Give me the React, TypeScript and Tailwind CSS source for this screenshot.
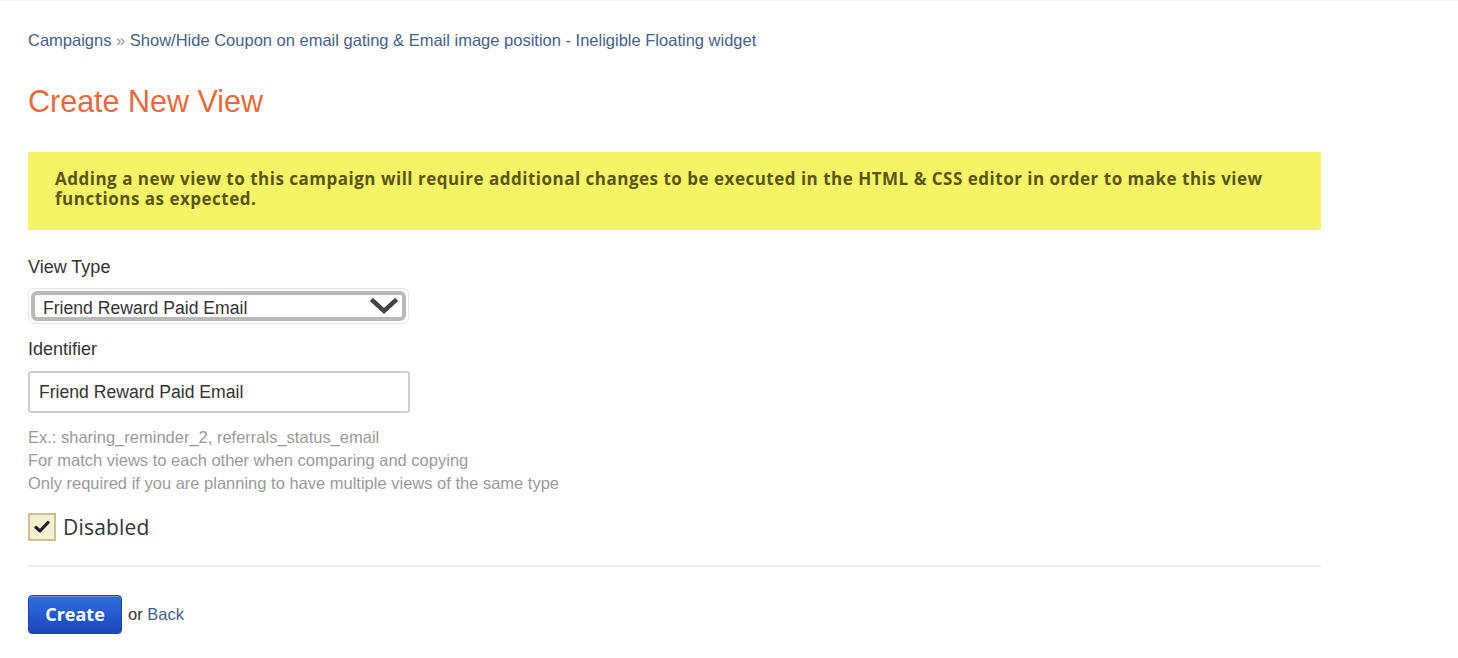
export default function App() {
  return (
    <div className="min-h-[658px] bg-white border-t border-[#f4f4f4] font-['Liberation_Sans',Arial,sans-serif]">
      <div className="w-[1293px] ml-[28px] pt-[29px]">
        {/* breadcrumb */}
        <div className="text-[16.5px] leading-[20px] text-[#44618a]">
          <a className="cursor-pointer">Campaigns</a>
          <span className="text-[#8a9ab0]"> » </span>
          <a className="cursor-pointer">Show/Hide Coupon on email gating &amp; Email image position - Ineligible Floating widget</a>
        </div>

        <h1 className="mt-[35px] text-[30.5px] leading-[32px] text-[#e8693a]">Create New View</h1>

        {/* warning */}
        <div className="mt-[35px] bg-[#f4f466] px-[27px] pt-[17px] pb-[20px] h-[78px]">
          <p className="font-['Open_Sans',sans-serif] font-bold text-[17px] leading-[20px] text-[#5b5618] tracking-[0.5px]">
            Adding a new view to this campaign will require additional changes to be executed in the HTML &amp; CSS editor in order to make this view functions as expected.
          </p>
        </div>

        {/* view type */}
        <label className="block mt-[27px] text-[18px] leading-[20px] text-[#333]">View Type</label>
        <div className="mt-[11px] w-[381px] h-[36px] rounded-[6px] border border-[#e6e6e6] p-[2px]">
          <div className="h-full rounded-[6px] border-[4px] border-[#b9b9b9] flex items-center justify-between pl-[8px] pr-[4px]">
            <span className="text-[17.6px] leading-[20px] text-[#333] pt-[3px]">Friend Reward Paid Email</span>
            <svg width="28" height="18" viewBox="0 0 28 18" className="text-[#444]">
              <path d="M3 4 L14 14 L25 4" fill="none" stroke="currentColor" strokeWidth="4.5" strokeLinecap="square" />
            </svg>
          </div>
        </div>

        {/* identifier */}
        <label className="block mt-[15px] text-[18px] leading-[20px] text-[#333]">Identifier</label>
        <div className="mt-[12px] w-[382px] h-[42px] rounded-[3px] border-2 border-[#cfcfcf] flex items-center px-[9px]">
          <span className="text-[17.6px] text-[#333]">Friend Reward Paid Email</span>
        </div>

        <div className="mt-[13px] text-[16.5px] leading-[23px] text-[#9a9a9a]">
          <div>Ex.: sharing_reminder_2, referrals_status_email</div>
          <div>For match views to each other when comparing and copying</div>
          <div>Only required if you are planning to have multiple views of the same type</div>
        </div>

        {/* disabled checkbox */}
        <div className="mt-[18px] flex items-center gap-[7px]">
          <div className="w-[28px] h-[28px] bg-[#f6f0d2] border-2 border-[#cdc194] flex items-center justify-center">
            <svg width="16" height="14" viewBox="0 0 16 14">
              <path d="M2 7.5 L6 11 L14 2.5" fill="none" stroke="#222" strokeWidth="3.2" strokeLinecap="round" strokeLinejoin="round" />
            </svg>
          </div>
          <span className="font-['Open_Sans',sans-serif] text-[21px] leading-[28px] text-[#333] tracking-[0.2px]">Disabled</span>
        </div>

        <div className="mt-[24px] h-[2px] bg-[#eeeeee]" />

        {/* actions */}
        <div className="mt-[28px] flex items-center gap-[6px]">
          <button className="w-[94px] h-[39px] rounded-[4px] border border-[#1c47b0] bg-gradient-to-b from-[#2f6fdf] to-[#1a46bb] text-white font-['Open_Sans',sans-serif] font-bold text-[18px] shadow-[inset_0_1px_0_rgba(255,255,255,0.25)]">
            Create
          </button>
          <span className="text-[16.5px] text-[#333]">
            or <a className="text-[#44618a] cursor-pointer">Back</a>
          </span>
        </div>
      </div>
    </div>
  )
}
